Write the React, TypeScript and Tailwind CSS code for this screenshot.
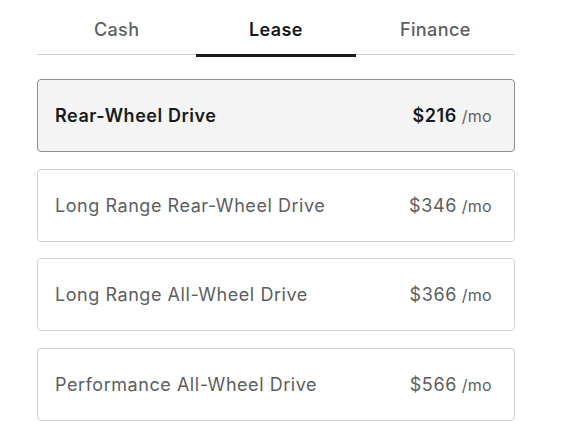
import React, { useState } from 'react';

const tabs = ['Cash', 'Lease', 'Finance'];

const options = [
  { name: 'Rear-Wheel Drive', price: 216 },
  { name: 'Long Range Rear-Wheel Drive', price: 346 },
  { name: 'Long Range All-Wheel Drive', price: 366 },
  { name: 'Performance All-Wheel Drive', price: 566 },
];

const App: React.FC = () => {
  const [tab, setTab] = useState('Lease');
  const [selected, setSelected] = useState(0);

  return (
    <div className="min-h-screen bg-white font-['Inter',sans-serif] text-[#171a20]">
      <div className="w-[478px] ml-[37px]">
        {/* Tabs */}
        <div className="relative flex border-b border-[#d0d1d2] h-[55px]">
          {tabs.map(t => (
            <button
              key={t}
              onClick={() => setTab(t)}
              className={`relative flex-1 pt-[4px] text-[18px] tracking-[0.4px] ${
                t === tab ? 'font-semibold text-[#171a20]' : 'font-medium text-[#5c5e62]'
              }`}
            >
              {t}
              {t === tab && (
                <span className="absolute left-0 right-0 -bottom-[3px] h-[3px] bg-[#171a20]" />
              )}
            </button>
          ))}
        </div>

        {/* Options */}
        <div className="mt-[24px] flex flex-col gap-[16.5px]">
          {options.map((o, i) => {
            const active = i === selected;
            return (
              <button
                key={o.name}
                onClick={() => setSelected(i)}
                className={`flex items-center justify-between h-[73px] pl-[17px] pr-[22px] rounded-[4px] border text-left ${
                  active
                    ? 'bg-[#f4f4f4] border-[#8e8e8e] text-[#171a20]'
                    : 'bg-white border-[#d0d1d2] text-[#5c5e62]'
                }`}
              >
                <span className={`text-[18px] tracking-[0.55px] ${active ? 'font-semibold' : 'font-normal'}`}>
                  {o.name}
                </span>
                <span className={`text-[18px] tracking-[0.6px] ${active ? 'font-semibold' : 'font-normal'}`}>
                  ${o.price}
                  <span className="text-[16px] tracking-[0.3px] font-normal text-[#5c5e62]"> /mo</span>
                </span>
              </button>
            );
          })}
        </div>
      </div>
    </div>
  );
};

export default App;
